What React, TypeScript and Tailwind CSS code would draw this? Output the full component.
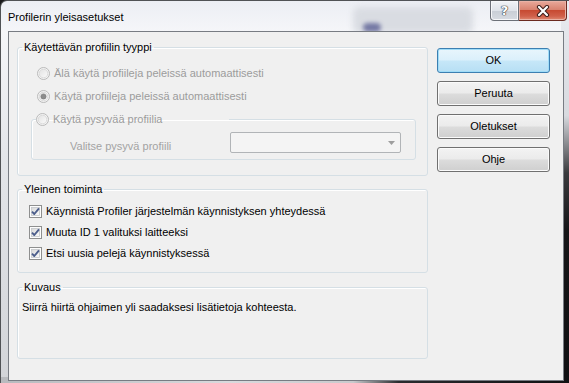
function Radio({ checked }: { checked?: boolean }) {
  return (
    <svg width="13" height="13" viewBox="0 0 13 13" className="shrink-0">
      <defs>
        <linearGradient id={checked ? 'rgc' : 'rgu'} x1="0" y1="0" x2="1" y2="1">
          <stop offset="0" stopColor="#e2e2e2" />
          <stop offset="1" stopColor="#fbfbfb" />
        </linearGradient>
      </defs>
      <circle cx="6.5" cy="6.5" r="6" fill="#f4f4f4" stroke="#b9b9b9" />
      <circle cx="6.5" cy="6.5" r="4.3" fill={`url(#${checked ? 'rgc' : 'rgu'})`} stroke="#d4d4d4" strokeWidth="0.8" />
      {checked && <circle cx="6.5" cy="6.5" r="2.6" fill="#8c8c8c" stroke="#777" strokeWidth="0.6" />}
    </svg>
  );
}

function Check() {
  return (
    <svg width="13" height="13" viewBox="0 0 13 13" className="shrink-0">
      <defs>
        <linearGradient id="cbg" x1="0" y1="0" x2="1" y2="1">
          <stop offset="0" stopColor="#d8d8d8" />
          <stop offset="1" stopColor="#fbfbfb" />
        </linearGradient>
      </defs>
      <rect x="0.5" y="0.5" width="12" height="12" fill="#fdfdfd" stroke="#8e8f8f" />
      <rect x="2.5" y="2.5" width="8" height="8" fill="url(#cbg)" stroke="#c3c6ca" strokeWidth="0.8" />
      <path d="M3 6.6 L5.3 9 L10 3.4" fill="none" stroke="#4c5e8c" strokeWidth="1.9" strokeLinejoin="round" />
    </svg>
  );
}

function Button({ label, primary }: { label: string; primary?: boolean }) {
  return (
    <div
      className={
        primary
          ? 'flex h-[25px] w-[113px] items-center justify-center rounded-[3px] border border-[#3c7fb1] bg-[linear-gradient(180deg,#e8f5fc_0%,#dbf0fb_48%,#c6e7f8_52%,#b7dff4_100%)] shadow-[inset_0_0_0_1px_#9fdcf8]'
          : 'flex h-[25px] w-[113px] items-center justify-center rounded-[3px] border border-[#707070] bg-[linear-gradient(180deg,#f3f3f3_0%,#ebebeb_48%,#dcdcdc_52%,#cfcfcf_100%)] shadow-[inset_0_0_0_1px_#fbfbfb]'
      }
    >
      {label}
    </div>
  );
}

export default function App() {
  return (
    <div className="h-[383px] w-[569px] overflow-hidden bg-[#19191b] font-['Liberation_Sans',sans-serif] text-[11px] leading-[13px] text-black">
      <div className="relative flex h-[383px] w-[569px] flex-col rounded-tl-[7px] border-l border-t border-[#505255] bg-[linear-gradient(180deg,#eceef4_0%,#f5f6f9_8%,#e4e6ea_40%,#d2d4d8_100%)]">
        {/* glass showing the desktop behind */}
        <div className="absolute right-0 top-0 h-full w-[8px] bg-[linear-gradient(180deg,#e9ebf0_0%,#d8dadf_30%,#3a3b3e_45%,#161618_60%,#101012_100%)]" />
        <div className="absolute bottom-0 left-0 h-[6px] w-full bg-[linear-gradient(90deg,#b8babe_0%,#d9dadd_40%,#c9cacd_62%,#2a2b2e_70%,#111113_100%)]" />
        <div className="absolute left-[352px] top-[6px] h-[26px] w-[120px] rounded-[6px] bg-[#d9dce2] blur-[3px]" />
        <div className="absolute left-[362px] top-[22px] h-[9px] w-[18px] rounded-full bg-[#4a4f8a] opacity-70 blur-[2px]" />

        {/* title bar */}
        <div className="relative flex h-[30px] shrink-0 items-start">
          <div className="pl-[7px] pt-[9px] text-[11px] leading-[14px] text-black">Profilerin yleisasetukset</div>
          <div className="ml-auto mr-[2px] flex">
            <div className="flex h-[20px] w-[29px] items-center justify-center rounded-bl-[4px] border border-t-0 border-[#6c7078] bg-[linear-gradient(180deg,#f1f3f6_0%,#dfe3e9_50%,#c9ced6_52%,#d7dbe1_100%)] shadow-[inset_0_0_0_1px_#f6f7f9]">
              <span className="font-['DejaVu_Sans',sans-serif] text-[13px] font-bold leading-[13px] text-white [text-shadow:0_0_1px_#2c2f36,0_0_1px_#2c2f36,0_0_1px_#2c2f36]">?</span>
            </div>
            <div className="flex h-[20px] w-[48px] items-center justify-center rounded-br-[4px] border border-l-0 border-t-0 border-[#6b2a20] bg-[linear-gradient(180deg,#e9a99b_0%,#d98370_45%,#c74a32_50%,#d0604a_80%,#e08a73_100%)] shadow-[inset_0_0_0_1px_#e9b2a6]">
              <svg width="16" height="12" viewBox="0 0 16 12">
                <path d="M4 2 L12 10 M12 2 L4 10" stroke="#3d1e1a" strokeWidth="4.2" strokeLinecap="round" />
                <path d="M4 2 L12 10 M12 2 L4 10" stroke="#ffffff" strokeWidth="2.2" strokeLinecap="round" />
              </svg>
            </div>
          </div>
        </div>

        {/* client area */}
        <div className="relative ml-[7px] flex h-[350px] w-[556px] border border-[#787c83] bg-[#f0f0f0]">
          <div className="ml-[8px] flex w-[411px] flex-col pt-[9px]">
            {/* group 1 */}
            <fieldset className="rounded-[3px] border border-[#d5dfe5] shadow-[inset_1px_1px_0_#ffffff]">
              <legend className="ml-[4px] px-[2px] leading-[13px]">Käytettävän profiilin tyyppi</legend>
              <div className="flex flex-col gap-[7px] pl-[13px] pr-[11px] pt-[11px] pb-[15px]">
                <div className="ml-[6px] flex h-[16px] items-center gap-[4px] text-[#9c9c9c]">
                  <Radio />
                  <span>Älä käytä profiileja peleissä automaattisesti</span>
                </div>
                <div className="ml-[6px] flex h-[16px] items-center gap-[4px] text-[#9c9c9c]">
                  <Radio checked />
                  <span>Käytä profiileja peleissä automaattisesti</span>
                </div>
                <fieldset className="rounded-[3px] border border-[#d5dfe5] shadow-[inset_1px_1px_0_#ffffff]">
                  <legend className="ml-[4px] flex h-[16px] w-[193px] items-center gap-[4px] text-[#9c9c9c]">
                    <Radio />
                    <span>Käytä pysyvää profiilia</span>
                  </legend>
                  <div className="flex items-end pb-[6px] pt-[5px]">
                    <span className="ml-[38px] w-[160px] text-[#a3a3a3]">Valitse pysyvä profiili</span>
                    <div className="flex h-[21px] w-[171px] items-center justify-end rounded-[2px] border border-[#b1b4b7] bg-[#f4f4f4] pr-[5px]">
                      <svg width="7" height="4" viewBox="0 0 7 4">
                        <path d="M0 0 H7 L3.5 4 Z" fill="#9e9e9e" />
                      </svg>
                    </div>
                  </div>
                </fieldset>
              </div>
            </fieldset>

            {/* group 2 */}
            <fieldset className="mt-[7px] rounded-[3px] border border-[#d5dfe5] shadow-[inset_1px_1px_0_#ffffff]">
              <legend className="ml-[4px] px-[2px] leading-[13px]">Yleinen toiminta</legend>
              <div className="flex flex-col gap-[5px] pl-[11px] pt-[7px] pb-[11px]">
                <div className="flex h-[16px] items-center gap-[4px]">
                  <Check />
                  <span>Käynnistä Profiler järjestelmän käynnistyksen yhteydessä</span>
                </div>
                <div className="flex h-[16px] items-center gap-[4px]">
                  <Check />
                  <span>Muuta ID 1 valituksi laitteeksi</span>
                </div>
                <div className="flex h-[16px] items-center gap-[4px]">
                  <Check />
                  <span>Etsi uusia pelejä käynnistyksessä</span>
                </div>
              </div>
            </fieldset>

            {/* group 3 */}
            <fieldset className="mt-[8px] rounded-[3px] border border-[#d5dfe5] shadow-[inset_1px_1px_0_#ffffff]">
              <legend className="ml-[4px] px-[2px] leading-[13px]">Kuvaus</legend>
              <div className="h-[64px] pl-[4px] pt-[7px]">Siirrä hiirtä ohjaimen yli saadaksesi lisätietoja kohteesta.</div>
            </fieldset>
          </div>

          {/* buttons */}
          <div className="ml-[9px] flex flex-col gap-[8px] pt-[16px]">
            <Button label="OK" primary />
            <Button label="Peruuta" />
            <Button label="Oletukset" />
            <Button label="Ohje" />
          </div>
        </div>
      </div>
    </div>
  );
}
